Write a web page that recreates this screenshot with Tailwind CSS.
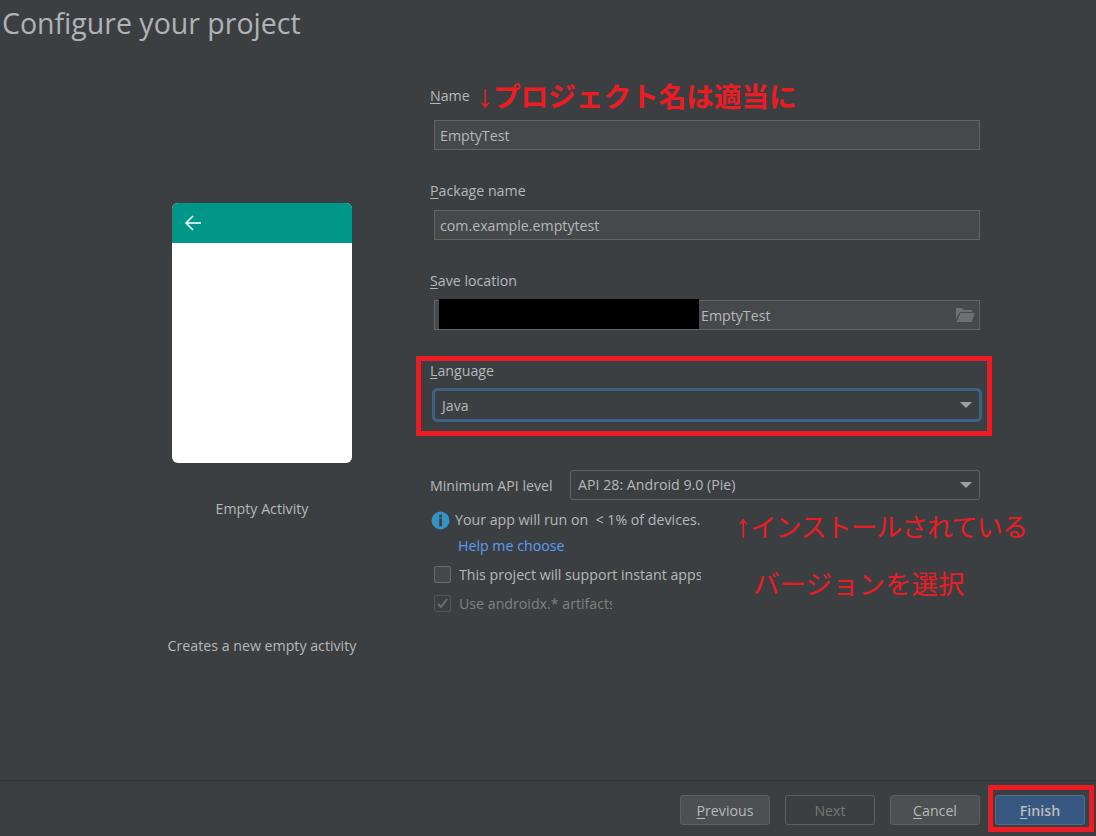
<!DOCTYPE html>
<html lang="ja">
  <head>
    <meta charset="utf-8" />
    <title>Configure your project</title>
    <script src="https://cdn.jsdelivr.net/npm/@tailwindcss/browser@4"></script>
  </head>
  <body class="bg-[#3c3f41] overflow-hidden">
    <div class="relative w-[1096px] h-[836px] flex flex-col text-[14.2px] leading-[20px] text-[#b6b8ba] font-['Open_Sans','Noto_Sans_CJK_JP',sans-serif]">
      <!-- TITLE -->
      <div class="h-[46px] pl-[2px] text-[28.5px] leading-[46px] text-[#b0b3b5]">Configure your project</div>

      <!-- BODY -->
      <div class="flex-1 flex min-h-0">
        <!-- template preview -->
        <div class="w-[430px] pl-[94px] flex flex-col items-center">
          <div class="mt-[157px] w-[180px] h-[260px] rounded-[6px] bg-white overflow-hidden">
            <div class="h-[40px] bg-[#009688] flex items-center pl-[12px]">
              <svg class="w-[18px] h-[18px]" viewBox="0 0 18 18" fill="none" stroke="#ffffff" stroke-width="1.6">
                <path d="M17 9H2M9 2L2 9l7 7" />
              </svg>
            </div>
          </div>
          <div class="mt-[36px]">Empty Activity</div>
          <div class="mt-[117px]">Creates a new empty activity</div>
        </div>

        <!-- form -->
        <div class="w-[550px] flex flex-col">
          <div class="mt-[40px] h-[20px]"><span class="underline underline-offset-2">N</span>ame</div>
          <div class="mt-[14px] ml-[4px] h-[30px] border border-[#646464] bg-[#45494a] pl-[5px] leading-[30px]">EmptyTest</div>

          <div class="mt-[31px] h-[20px]"><span class="underline underline-offset-2">P</span>ackage name</div>
          <div class="mt-[9px] ml-[4px] h-[30px] border border-[#646464] bg-[#45494a] pl-[5px] leading-[30px]">com.example.emptytest</div>

          <div class="mt-[31px] h-[20px]"><span class="underline underline-offset-2">S</span>ave location</div>
          <div class="mt-[9px] ml-[4px] h-[30px] border border-[#646464] bg-[#45494a] pl-[266px] pr-[4px] leading-[30px] flex justify-between items-center">
            <span class="pt-[1px]">EmptyTest</span>
            <svg class="w-[20px] h-[16px]" viewBox="0 0 20 16" fill="#6c7072">
              <path d="M1 1h6l2 2h8v2H5L1 12z" />
              <path d="M5.500 6H20l-3.500 9H1.500z" />
            </svg>
          </div>

          <div class="mt-[31px] h-[20px]"><span class="underline underline-offset-2">L</span>anguage</div>
          <div class="mt-[9px] ml-[4px] h-[30px] rounded-[3px] border border-[#646464] outline-[3px] outline-[#3d6185] -outline-offset-[1px] pl-[7px] pr-[7px] leading-[30px] flex justify-between items-center">
            <span class="pt-[1px]">Java</span>
            <span class="w-0 h-0 border-x-[6px] border-x-transparent border-t-[6px] border-t-[#a0a0a0]"></span>
          </div>

          <div class="mt-[50px] flex items-center h-[30px]">
            <div class="w-[140px] pt-[2px]">Minimum API level</div>
            <div class="flex-1 h-[30px] rounded-[3px] border border-[#646464] pl-[7px] pr-[7px] leading-[30px] flex justify-between items-center">
              <span>API 28: Android 9.0 (Pie)</span>
              <span class="w-0 h-0 border-x-[6px] border-x-transparent border-t-[6px] border-t-[#a0a0a0]"></span>
            </div>
          </div>

          <div class="mt-[10px] h-[20px] flex items-center gap-[5px]">
            <svg class="w-[19px] h-[19px] ml-[1px]" viewBox="0 0 18 18">
              <circle cx="9" cy="9" r="8.500" fill="#3592c4" />
              <rect x="7.800" y="3.500" width="2.600" height="2.500" fill="#3c3f41" />
              <rect x="7.800" y="7" width="2.600" height="7.500" fill="#3c3f41" />
            </svg>
            <span>Your app will run on &nbsp;&lt; 1% of devices.</span>
          </div>
          <div class="mt-[6px] ml-[28px] h-[20px] text-[#589df6]">Help me choose</div>

          <div class="mt-[8px] ml-[4px] h-[20px] flex items-center gap-[8px]">
            <span class="w-[17px] h-[17px] rounded-[2px] border border-[#6b6b6b] bg-[#43494a]"></span>
            <span class="w-[242px] pt-[1px] overflow-hidden whitespace-nowrap">This project will support instant apps</span>
          </div>
          <div class="mt-[9px] ml-[4px] h-[20px] flex items-center gap-[8px] text-[#808080]">
            <span class="w-[17px] h-[17px] rounded-[2px] border border-[#565656] flex items-center justify-center">
              <svg class="w-[13px] h-[13px]" viewBox="0 0 13 13" fill="none" stroke="#6e6e6e" stroke-width="2">
                <path d="M2 7l3 3 6-8" />
              </svg>
            </span>
            <span class="w-[153px] pt-[1px] overflow-hidden whitespace-nowrap">Use androidx.* artifacts</span>
          </div>
        </div>
      </div>

      <!-- FOOTER -->
      <div class="h-[56px] border-t border-[#323232] flex items-start justify-end gap-[15px] pt-[14px] pr-[11px]">
        <div class="w-[90px] h-[30px] rounded-[3px] border border-[#5e6060] bg-[#4c5052] text-center leading-[30px]"><span class="underline underline-offset-2">P</span>revious</div>
        <div class="w-[90px] h-[30px] rounded-[3px] border border-[#5e6060] text-center leading-[30px] text-[#777777]">Next</div>
        <div class="w-[90px] h-[30px] rounded-[3px] border border-[#5e6060] bg-[#4c5052] text-center leading-[30px]"><span class="underline underline-offset-2">C</span>ancel</div>
        <div class="w-[90px] h-[30px] rounded-[3px] border border-[#4c708c] bg-[#365880] text-center leading-[30px] font-semibold text-[#bbbbbb]"><span class="underline underline-offset-2">F</span>inish</div>
      </div>

      <!-- redaction and annotations drawn over the screenshot -->
      <div class="absolute left-[439px] top-[299px] w-[260px] h-[30px] bg-black"></div>
      <div class="absolute left-[416px] top-[356px] w-[576px] h-[80px] border-[5px] border-[#ed1c24]"></div>
      <div class="absolute left-[988px] top-[785px] w-[106px] h-[47px] border-[5px] border-[#ed1c24]"></div>
      <div class="absolute left-[477px] top-[74px] text-[27.6px] leading-[44px] font-bold text-[#ed1c24] whitespace-nowrap"><span class="font-['Liberation_Sans'] font-normal text-[32px] leading-none">↓</span>プロジェクト名は適当に</div>
      <div class="absolute left-[735px] top-[505px] text-[26px] tracking-[-0.7px] leading-[44px] text-[#ed1c24] whitespace-nowrap"><span class="font-['Liberation_Sans'] text-[32px] leading-none">↑</span>インストールされている</div>
      <div class="absolute left-[753px] top-[562px] text-[26.500px] leading-[44px] text-[#ed1c24] whitespace-nowrap">バージョンを選択</div>
    </div>
  </body>
</html>
